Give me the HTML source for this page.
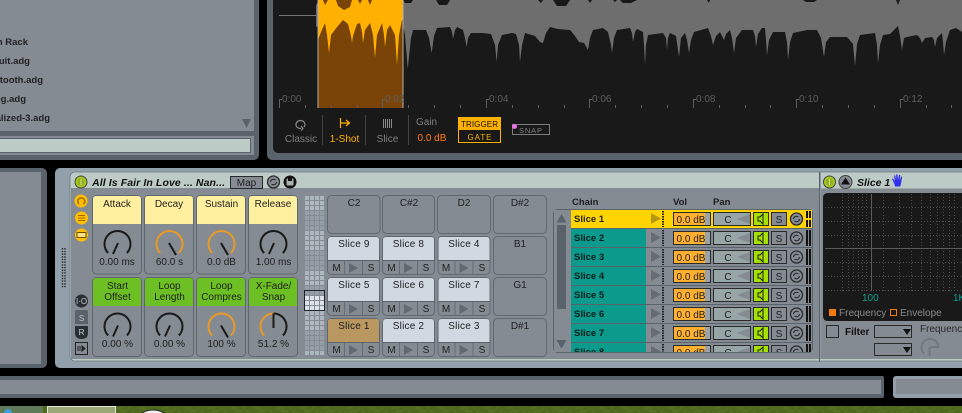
<!DOCTYPE html>
<html><head><meta charset="utf-8"><style>
html,body{margin:0;padding:0;background:#000;width:962px;height:413px;overflow:hidden}
svg{display:block;position:absolute;left:0;top:0}
text{font-family:"Liberation Sans",sans-serif;font-size:10px;fill:#1e1e1e}
.m{text-anchor:middle}
.b{font-weight:bold}
.bi{font-weight:bold;font-style:italic}
.g{fill:#7f7f7f}
.t{fill:#5e5e5e;font-size:10px}
.e{text-anchor:end;font-weight:bold;font-size:9.5px;fill:#222}
.s{font-size:9.5px;fill:#0c1c1a;font-weight:bold}
</style></head><body>
<svg width="962" height="413" viewBox="0 0 962 413" xmlns="http://www.w3.org/2000/svg">
<defs>
<pattern id="pg" x="305" y="196" width="5" height="5" patternUnits="userSpaceOnUse"><rect width="4" height="4" fill="#949fa9"/></pattern>
<pattern id="pl" x="305" y="196" width="5" height="5" patternUnits="userSpaceOnUse"><rect width="4" height="4" fill="#acb7bf"/></pattern>
<pattern id="pw" x="305" y="196" width="5" height="5" patternUnits="userSpaceOnUse"><rect width="4" height="4" fill="#dde3e8"/></pattern>
<clipPath id="cl"><rect x="554" y="210" width="258" height="142"/></clipPath>
<g id="kb"><path d="M-9.4 9A13 13 0 1 1 9.4 9" fill="none" stroke="#1a1a1a" stroke-width="2"/><path d="M0.5 -1L-4.5 10" stroke="#1a1a1a" stroke-width="2"/></g>
<g id="ko"><path d="M-9.4 9A13 13 0 1 1 9.4 9" fill="none" stroke="#e89a26" stroke-width="2"/><path d="M-0.5 -1L6.5 11" stroke="#1a1a1a" stroke-width="2"/></g>
<g id="pad"><rect x=".5" y=".5" width="52" height="38" rx="4" fill="#858b92" stroke="#60676f"/><path d="M1 24V4q0-3 3-3h45q3 0 3 3v20z" fill="#d0d8e2"/><path d="M1 24.5h52" stroke="#5a626c"/><path d="M17.5 25v13M35.5 25v13" stroke="#666d75"/><path d="M22 27l9 5l-9 5z" fill="#626970"/></g>
<g id="row">
<rect x="646" y="0" width="166" height="18" fill="#858b92"/>
<rect x="571" y="0" width="75" height="18" fill="#0b9a8c"/>
<path d="M651 3l10 5.500l-10 5.500z" fill="#666c73"/>
<path d="M663 1v16" stroke="#222" stroke-width="2" stroke-dasharray="1.500 1"/>
<rect x="673.500" y="2.500" width="37" height="13" fill="#9aa3a8" stroke="#2a2a2a"/>
<rect x="674" y="3" width="31" height="12" fill="#ffb030"/>
<rect x="713.500" y="2.500" width="37" height="13" fill="#98a5a6" stroke="#2a2a2a"/>
<path d="M750 4v10l-13-5z" fill="#858b92"/>
<rect x="753.500" y="2.500" width="15" height="13" fill="#a6e000" stroke="#2a2a2a"/>
<path d="M758 7h2l3-3v10l-3-3h-2z" fill="none" stroke="#1a1a1a"/>
<rect x="771.500" y="2.500" width="15" height="13" fill="#858b92" stroke="#2a2a2a"/>
<circle cx="796.500" cy="9" r="6" fill="#858b92" stroke="#2a2a2a" stroke-width="1.300"/>
<path d="M793.500 9a3 3 0 0 1 5-2M799.500 9a3 3 0 0 1-5 2" fill="none" stroke="#222"/>
<path d="M807 1v16M810 1v16" stroke="#111" stroke-width="2"/>
</g>
</defs>

<!-- top left panel -->
<rect x="-10" y="-10" width="269" height="170" rx="5" fill="#5a626c"/>
<rect x="0" y="0" width="254" height="131" fill="#858b92"/>
<rect x="0" y="136" width="254" height="19" fill="#858b92"/>
<rect x="-2" y="138.500" width="252.500" height="14" fill="#bdcbc6" stroke="#5a626c"/>
<path d="M242 119h9l-4.500 9z" fill="#5a626c"/>
<text class="e" x="28" y="45">Chain Rack</text>
<text class="e" x="30" y="64">Circuit.adg</text>
<text class="e" x="43" y="83">Sawtooth.adg</text>
<text class="e" x="26" y="102">Arpeg.adg</text>
<text class="e" x="50" y="121">Normalized-3.adg</text>

<!-- top right panel -->
<rect x="267" y="-10" width="705" height="170" rx="5" fill="#5a626c"/>
<path d="M273 0H962V153H279q-6 0-6-6z" fill="#191919"/>
<rect x="318" y="0" width="85" height="108" fill="#7a4408"/>
<path d="M279 15.500H316" stroke="#777"/>
<path d="M316 27V5l2-3v24z" fill="#6e6e6e"/>
<path d="M318 40L321 32L325 23L327 35L329 53L331 35L337 27L343 20L348 24L351 36L352 43L353 36L357 24L360 23L362 32L363 43L365 30L370 23L373 35L375 58L377 35L382 23L384 35L385 47L387 30L390 25L395 35L397 65L399 35L402 20L403 20V0H372L370 5L368 0H362L360 4L358 0H352L350 7L344 10L338 6L336 0H328L325 5L323 0H318Z" fill="#ffb000"/>
<path d="M403 25L405 35L407.700 69L411 38L413 30L420 30L426 30L429 38L431.700 53L434 36L437 28L450 27L452 32L453 39L455 30L457 27L463 30L465 38L466.700 47L468 38L471 33L483 33L491 34L495 45L496.700 62L498 45L502 35L512 33L516 34L519 45L520 62L522 45L525 33L535 36L540 42L543 43L546 33L550 27L558 29L570 30L575 36L579 42L584 43L588 50L590 38L593 30L603 28L608 32L611 45L612 53L614 38L617 30L630 28L632 33L633 42L635 32L637 29L643 32L644 45L645 65L646 45L648 35L663 33L666 38L667 50L668 38L670 33L676 36L679 57L681 38L685 33L687 40L689 53L691 40L694 32L708 28L711 36L713 45L716 36L720 32L722 36L724 40L726 34L730 30L732 38L734 53L736 38L742 30L753 30L755 36L756 47L758 34L762 28L765 28L766 40L767 55L769 40L773 32L785 32L787 42L788 60L790 42L793 33L807 30L817 30L821 38L824 57L826 42L830 37L847 37L853 44L855 66L857 44L860 35L875 33L877 45L878 63L880 45L883 35L890 34L898 26L900 36L902 50L904 38L907 37L917 35L920 38L922 43L925 38L932 37L934 40L935 47L937 38L942 33L943 42L944 55L946 42L950 30L956 28L962 32V0H403Z" fill="#6e6e6e"/>
<path d="M403 0h10l-2 3h-6zM436 0h14l-3 5h-8zM538 0h5l-2 3zM553 0h17l-4 6h-9zM588 0h4l-2 3zM613 0h4l-2 2zM620 0h17l-6 3h-8zM707 0h3l-1 3zM803 0h14l-3 2h-8zM896 0h4l-2 5z" fill="#191919"/>
<path d="M318 0V108M403 0V108" stroke="#b8b0a4" stroke-width="1"/>
<g stroke="#5e5e5e" fill="none">
<path d="M279.500 108V99.500H282M382.500 108V99.500H385M486.500 108V99.500H489M589.500 108V99.500H592M693.500 108V99.500H696M796.500 108V99.500H799M900.500 108V99.500H903"/>
<path d="M305.500 105v3M331.500 105v3M357.500 105v3M408.500 105v3M434.500 105v3M460.500 105v3M512.500 105v3M538.500 105v3M564.500 105v3M615.500 105v3M641.500 105v3M667.500 105v3M719.500 105v3M745.500 105v3M770.500 105v3M822.500 105v3M848.500 105v3M874.500 105v3M926.500 105v3M951.500 105v3"/>
</g>
<text class="t" x="282" y="102">0:00</text><text class="t" x="385" y="102">0:02</text><text class="t" x="489" y="102">0:04</text><text class="t" x="592" y="102">0:06</text><text class="t" x="696" y="102">0:08</text><text class="t" x="799" y="102">0:10</text><text class="t" x="903" y="102">0:12</text>

<path d="M322.500 115v30M365.500 115v30M408.500 115v30" stroke="#444"/>
<path d="M304 127a4.500 4 0 1 0-3 1.500M301 126l2 2.500l-2 2" fill="none" stroke="#8a8a8a" stroke-width="1.200"/>
<path d="M340.500 118v10M341 123h8M346 120l3.500 3l-3.500 3" fill="none" stroke="#ffb000" stroke-width="1.200"/>
<path d="M383.500 119v9M385.500 119v9M387.500 119v9M389.500 119v9M391.500 119v9" stroke="#8a8a8a"/>
<text class="m g" x="301" y="142">Classic</text>
<text class="m" x="344.500" y="142" style="fill:#ffb000">1-Shot</text>
<text class="m g" x="387.500" y="142">Slice</text>
<text class="g" x="416" y="125">Gain</text>
<text x="417.500" y="141" style="fill:#ff7a10">0.0 dB</text>
<rect x="458.500" y="117.500" width="42" height="25" fill="#191919" stroke="#ffb000"/>
<rect x="458" y="117" width="43" height="13" fill="#ffb000"/>
<text x="461" y="127" textLength="37" style="font-size:8px;fill:#111">TRIGGER</text>
<text x="467.500" y="140" textLength="24" style="font-size:8px;fill:#ffb000">GATE</text>
<rect x="512.500" y="124.500" width="37" height="10" fill="none" stroke="#7d7d7d"/>
<text x="519" y="133" textLength="23" style="font-size:7.500px;fill:#808080">SNAP</text>
<circle cx="514.500" cy="126.500" r="2.500" fill="#f070e8"/>

<!-- lower left panel -->
<rect x="-10" y="168" width="57" height="200" rx="5" fill="#5a626c"/>
<rect x="0" y="172" width="41" height="192" fill="#858b92"/>

<!-- rack -->
<rect x="55" y="168" width="917" height="200" rx="5" fill="#91a0ab"/>
<path d="M62.500 248V288M65 248V288" stroke="#333" stroke-width="1.500" stroke-dasharray="1.500 1.200"/>
<rect x="70" y="172" width="900" height="189" rx="5" fill="#bdcbc6" stroke="#6f7a80" stroke-width=".8"/>
<rect x="71" y="188" width="891" height="171" fill="#858b92"/>
<rect x="819" y="172" width="1" height="190" fill="#5a626c"/>
<rect x="820" y="172.500" width="1" height="186" fill="#8d9aa2"/>
<rect x="821" y="172.500" width="141" height="16" fill="#bdcbc6"/>

<!-- rack title -->
<circle cx="81" cy="182" r="6" fill="#a6c81e" stroke="#444" stroke-width="1"/>
<circle cx="81" cy="182" r="3.500" fill="#8fb020"/><path d="M81 179v6" stroke="#d8e090"/>
<text class="bi" x="92" y="186" textLength="133" style="font-size:10.500px;fill:#111">All Is Fair In Love ... Nan...</text>
<rect x="230.500" y="176.500" width="32" height="12" fill="#858b92" stroke="#2a2a2a"/>
<text class="m" x="246.500" y="186">Map</text>
<circle cx="273.500" cy="182" r="6" fill="#858b92" stroke="#2a2a2a" stroke-width="1.300"/>
<path d="M270.500 182a3 3 0 0 1 5-2M276.500 182a3 3 0 0 1-5 2" fill="none" stroke="#222"/>
<circle cx="290" cy="182" r="6.500" fill="#111"/><rect x="286.500" y="178.500" width="7" height="7" rx="1" fill="#a9b2b0"/><rect x="288" y="178.500" width="4" height="2.500" fill="#111"/>

<!-- left icons -->
<circle cx="81" cy="201" r="6.500" fill="#ffbe00"/><path d="M79 204a3.500 3.500 0 1 1 4.500 0" fill="none" stroke="#a06a00" stroke-width="1.500"/>
<circle cx="81.500" cy="218" r="6.500" fill="#ffbe00"/><path d="M78 215.500h7M78 218h7M78 220.500h7" stroke="#a06a00"/>
<circle cx="81.500" cy="235" r="6.500" fill="#ffbe00"/><rect x="77" y="232.500" width="9" height="5" fill="#ffe080" stroke="#6b5000"/>
<circle cx="81.500" cy="301" r="6.500" fill="#2a2f35"/>
<text class="m" x="81.500" y="304" style="font-size:8px;fill:#c8d0d0">I·O</text>
<path d="M75 312q0-2 2-2h9q2 0 2 2v12h-13z" fill="#5a626c"/>
<path d="M75 326h13v7q0 6-6.500 6t-6.500-6z" fill="#2a2f35"/>
<text class="m" x="81.500" y="321" style="font-size:8px;fill:#c0c8c8">S</text>
<text class="m" x="81.500" y="335" style="font-size:8px;fill:#c8d0d0">R</text>
<rect x="75.500" y="342.500" width="12" height="12" fill="#858b92" stroke="#222"/>
<path d="M78 346v5M80 346v5M82 346l3 2.500l-3 2.500z" stroke="#222" fill="#222"/>

<!-- macros -->
<g fill="#858b92" stroke="#5f666e">
<rect x="92.500" y="195.500" width="49" height="78.500" rx="4"/><rect x="144.500" y="195.500" width="49" height="78.500" rx="4"/><rect x="196.500" y="195.500" width="49" height="78.500" rx="4"/><rect x="248.500" y="195.500" width="49" height="78.500" rx="4"/>
<rect x="92.500" y="277.500" width="49" height="79" rx="4"/><rect x="144.500" y="277.500" width="49" height="79" rx="4"/><rect x="196.500" y="277.500" width="49" height="79" rx="4"/><rect x="248.500" y="277.500" width="49" height="79" rx="4"/>
</g>
<g fill="#fff0a0">
<path d="M93 224V199q0-3 3-3h42q3 0 3 3v25z"/><path d="M145 224V199q0-3 3-3h42q3 0 3 3v25z"/><path d="M197 224V199q0-3 3-3h42q3 0 3 3v25z"/><path d="M249 224V199q0-3 3-3h42q3 0 3 3v25z"/>
</g>
<g fill="#6cc024">
<path d="M93 306V281q0-3 3-3h42q3 0 3 3v25z"/><path d="M145 306V281q0-3 3-3h42q3 0 3 3v25z"/><path d="M197 306V281q0-3 3-3h42q3 0 3 3v25z"/><path d="M249 306V281q0-3 3-3h42q3 0 3 3v25z"/>
</g>
<text class="m" x="117" y="207">Attack</text><text class="m" x="169" y="207">Decay</text><text class="m" x="221.500" y="207">Sustain</text><text class="m" x="273" y="207">Release</text>
<use href="#kb" x="117.500" y="244"/><use href="#ko" x="169.500" y="244"/><use href="#ko" x="221.500" y="244"/><use href="#kb" x="273.500" y="244"/>
<text class="m" x="117" y="265">0.00 ms</text><text class="m" x="169.500" y="265">60.0 s</text><text class="m" x="221.500" y="265">0.0 dB</text><text class="m" x="273.500" y="265">1.00 ms</text>
<text class="m" x="117.500" y="289">Start</text><text class="m" x="117.500" y="300">Offset</text>
<text class="m" x="169.500" y="289">Loop</text><text class="m" x="169.500" y="300">Length</text>
<text class="m" x="221.500" y="289">Loop</text><text class="m" x="221.500" y="300">Compres</text>
<text class="m" x="273.500" y="289">X-Fade/</text><text class="m" x="273.500" y="300">Snap</text>
<use href="#kb" x="117.500" y="326.500"/><use href="#kb" x="169.500" y="326.500"/><use href="#ko" x="221.500" y="326.500"/>
<path d="M264.100 335.500A13 13 0 0 1 273.500 313.500" fill="none" stroke="#e89a26" stroke-width="2"/>
<path d="M273.500 313.500A13 13 0 0 1 282.900 335.500" fill="none" stroke="#1a1a1a" stroke-width="2"/>
<path d="M273.500 313.500V328" stroke="#1a1a1a" stroke-width="2"/>
<text class="m" x="117.500" y="347">0.00 %</text><text class="m" x="169.500" y="347">0.00 %</text><text class="m" x="221.500" y="347">100 %</text><text class="m" x="273.500" y="347">51.2 %</text>

<!-- pad overview -->
<rect x="305" y="196" width="20" height="15" fill="url(#pl)"/>
<rect x="305" y="211" width="20" height="20" fill="url(#pg)"/>
<rect x="305" y="231" width="20" height="20" fill="url(#pl)"/>
<rect x="305" y="251" width="20" height="20" fill="url(#pg)"/>
<rect x="305" y="271" width="20" height="15" fill="url(#pl)"/>
<rect x="305" y="286" width="20" height="10" fill="url(#pg)"/>
<rect x="305" y="296" width="20" height="15" fill="url(#pw)"/>
<rect x="305" y="311" width="20" height="20" fill="url(#pl)"/>
<rect x="305" y="331" width="20" height="20" fill="url(#pg)"/>
<rect x="305" y="351" width="20" height="5" fill="url(#pl)"/>
<rect x="304.500" y="290.500" width="20" height="20" fill="none" stroke="#1e2226"/>

<!-- pads -->
<g fill="#858b92" stroke="#60676f">
<rect x="327.500" y="195.500" width="52.500" height="38" rx="4"/><rect x="382.500" y="195.500" width="52" height="38" rx="4"/><rect x="437.500" y="195.500" width="53" height="38" rx="4"/><rect x="493.500" y="195.500" width="53" height="38" rx="4"/>
<rect x="493.500" y="236.500" width="53" height="38" rx="4"/><rect x="493.500" y="277.500" width="53" height="38" rx="4"/><rect x="493.500" y="318.500" width="53" height="38" rx="4"/>
</g>
<text class="m" x="354" y="206">C2</text><text class="m" x="409" y="206">C#2</text><text class="m" x="464" y="206">D2</text><text class="m" x="520" y="206">D#2</text>
<text class="m" x="520" y="247">B1</text><text class="m" x="520" y="288">G1</text><text class="m" x="520" y="329">D#1</text>
<use href="#pad" x="327" y="236"/><use href="#pad" x="382" y="236"/><use href="#pad" x="437.500" y="236"/>
<use href="#pad" x="327" y="277"/><use href="#pad" x="382" y="277"/><use href="#pad" x="437.500" y="277"/>
<use href="#pad" x="327" y="318"/><use href="#pad" x="382" y="318"/><use href="#pad" x="437.500" y="318"/>
<path d="M328 342V322q0-3 3-3h45q3 0 3 3v20z" fill="#b89860"/><path d="M328 342.500h52" stroke="#5a626c"/>
<g style="letter-spacing:.2px">
<text class="m" x="354" y="247">Slice 9</text><text class="m" x="408.500" y="247">Slice 8</text><text class="m" x="464" y="247">Slice 4</text>
<text class="m" x="354" y="288">Slice 5</text><text class="m" x="408.500" y="288">Slice 6</text><text class="m" x="464" y="288">Slice 7</text>
<text class="m" x="354" y="329">Slice 1</text><text class="m" x="408.500" y="329">Slice 2</text><text class="m" x="464" y="329">Slice 3</text>
</g>
<g style="font-size:9.500px">
<text class="m" x="336.500" y="271">M</text><text class="m" x="371" y="271">S</text><text class="m" x="391.500" y="271">M</text><text class="m" x="426" y="271">S</text><text class="m" x="446" y="271">M</text><text class="m" x="482" y="271">S</text>
<text class="m" x="336.500" y="312">M</text><text class="m" x="371" y="312">S</text><text class="m" x="391.500" y="312">M</text><text class="m" x="426" y="312">S</text><text class="m" x="446" y="312">M</text><text class="m" x="482" y="312">S</text>
<text class="m" x="336.500" y="353">M</text><text class="m" x="371" y="353">S</text><text class="m" x="391.500" y="353">M</text><text class="m" x="426" y="353">S</text><text class="m" x="446" y="353">M</text><text class="m" x="482" y="353">S</text>
</g>

<!-- chain list -->
<text class="b" x="572" y="205" style="font-size:9.500px">Chain</text>
<text class="b" x="673" y="205" style="font-size:9.500px">Vol</text>
<text class="b" x="713" y="205" style="font-size:9.500px">Pan</text>
<rect x="553.500" y="209.500" width="259" height="143" rx="4" fill="#5a626c" stroke="#5a626c"/>
<rect x="554" y="210" width="17" height="142" fill="#858b92"/>
<path d="M561.500 214l5 8.500h-10z" fill="#5a626c"/>
<rect x="557" y="225" width="9" height="84" fill="#5a626c"/>
<path d="M556.500 340h10l-5 8.500z" fill="#5a626c"/>
<g clip-path="url(#cl)">
<use href="#row" x="0" y="210"/><use href="#row" x="0" y="229"/><use href="#row" x="0" y="248"/><use href="#row" x="0" y="267"/><use href="#row" x="0" y="286"/><use href="#row" x="0" y="305"/><use href="#row" x="0" y="324"/><use href="#row" x="0" y="343"/>
<!-- selected row -->
<rect x="571" y="210" width="241" height="18" fill="#ffd400"/>
<path d="M651 213l10 5.500l-10 5.500z" fill="#b59a10"/>
<path d="M663 211v16" stroke="#222" stroke-width="2" stroke-dasharray="1.500 1"/>
<rect x="673.500" y="212.500" width="37" height="13" fill="#9aa3a8" stroke="#2a2a2a"/><rect x="674" y="213" width="31" height="12" fill="#ffb030"/>
<rect x="713.500" y="212.500" width="37" height="13" fill="#98a5a6" stroke="#2a2a2a"/><path d="M750 214v10l-13-5z" fill="#858b92"/>
<rect x="753.500" y="212.500" width="15" height="13" fill="#a6e000" stroke="#2a2a2a"/><path d="M758 217h2l3-3v10l-3-3h-2z" fill="none" stroke="#1a1a1a"/>
<rect x="771.500" y="212.500" width="15" height="13" fill="#858b92" stroke="#2a2a2a"/>
<circle cx="796.500" cy="219" r="6" fill="#858b92" stroke="#2a2a2a" stroke-width="1.300"/><path d="M793.500 219a3 3 0 0 1 5-2M799.500 219a3 3 0 0 1-5 2" fill="none" stroke="#222"/>
<path d="M807 211v16M810 211v16" stroke="#111" stroke-width="2" stroke-dasharray="7 2"/>
<text class="s" x="574" y="222" style="fill:#222">Slice 1</text><text class="s" x="574" y="241">Slice 2</text><text class="s" x="574" y="260">Slice 3</text><text class="s" x="574" y="279">Slice 4</text><text class="s" x="574" y="298">Slice 5</text><text class="s" x="574" y="317">Slice 6</text><text class="s" x="574" y="336">Slice 7</text><text class="s" x="574" y="355">Slice 8</text>
<text class="m" x="691" y="223">0.0 dB</text><text class="m" x="691" y="242">0.0 dB</text><text class="m" x="691" y="261">0.0 dB</text><text class="m" x="691" y="280">0.0 dB</text><text class="m" x="691" y="299">0.0 dB</text><text class="m" x="691" y="318">0.0 dB</text><text class="m" x="691" y="337">0.0 dB</text><text class="m" x="691" y="356">0.0 dB</text>
<text class="m" x="728" y="223">C</text><text class="m" x="728" y="242">C</text><text class="m" x="728" y="261">C</text><text class="m" x="728" y="280">C</text><text class="m" x="728" y="299">C</text><text class="m" x="728" y="318">C</text><text class="m" x="728" y="337">C</text><text class="m" x="728" y="356">C</text>
<text class="m" x="779" y="223">S</text><text class="m" x="779" y="242">S</text><text class="m" x="779" y="261">S</text><text class="m" x="779" y="280">S</text><text class="m" x="779" y="299">S</text><text class="m" x="779" y="318">S</text><text class="m" x="779" y="337">S</text><text class="m" x="779" y="356">S</text>
</g>

<!-- slice device -->
<circle cx="829.500" cy="182" r="6" fill="#a6c81e" stroke="#444"/><circle cx="829.500" cy="182" r="3.500" fill="#8fb020"/><path d="M829.500 179v6" stroke="#d8e090"/>
<circle cx="845.500" cy="182" r="6.500" fill="#858b92" stroke="#444"/><path d="M845.500 177.500l4.500 7h-9z" fill="#111"/>
<text class="bi" x="857" y="186" style="font-size:10.500px;fill:#111">Slice 1</text>
<path d="M894 183l-2-4 1-.5 2 3-1-6h1.200l1 4.500 0-5.500h1.300l.5 5.500 1-5h1.200l-.5 5.500 1.500-4h1l-1 6-1 4h-5z" fill="#3030f0"/>
<path d="M823 198q0-5 5-5H962V321H828q-5 0-5-5z" fill="#191919"/>
<g stroke="#4a4a4a" stroke-dasharray="1 2" fill="none">
<path d="M825 207.500H962M825 221.500H962M825 235.500H962M825 262.500H962M825 276.500H962M825 290.500H962"/>
<path d="M842.500 194V291M848.500 194V291M853.500 194V291M858.500 194V291M862.500 194V291M866.500 194V291M883.500 194V291M899.500 194V291M911.500 194V291M921.500 194V291M930.500 194V291M937.500 194V291M943.500 194V291M949.500 194V291M954.500 194V291"/>
</g>
<path d="M825 248.500H962M871.500 194V291" stroke="#5a5a5a"/>
<text x="862" y="301" style="fill:#0aa090">100</text><text x="953" y="301" style="fill:#0aa090">1K</text>
<rect x="829" y="309" width="7" height="7" fill="#f57a10"/>
<text x="839" y="316" style="fill:#8a8a8a">Frequency</text>
<rect x="890.500" y="309.500" width="6" height="6" fill="none" stroke="#f57a10"/>
<text x="900" y="316" style="fill:#8a8a8a">Envelope</text>
<rect x="826.500" y="325.500" width="12" height="12" fill="#858b92" stroke="#2a2a2a"/>
<text class="b" x="845" y="335" style="fill:#111">Filter</text>
<rect x="874.500" y="325.500" width="37" height="12" fill="#858b92" stroke="#2a2a2a"/><path d="M903 329h8l-4 6z" fill="#111"/>
<rect x="874.500" y="343.500" width="37" height="12" fill="#858b92" stroke="#2a2a2a"/><path d="M903 347h8l-4 6z" fill="#111"/>
<text x="920" y="332" style="fill:#2a2a2a">Frequency</text>
<path d="M924.300 353.700A8.500 8.500 0 1 1 938.500 347H930M929.500 347v9" fill="none" stroke="#707a7e" stroke-width="2"/>

<!-- bottom bars -->
<rect x="-10" y="376" width="894" height="22" rx="2" fill="#5a626c"/>
<rect x="0" y="380" width="881" height="14" fill="#858b92"/>
<rect x="893" y="376" width="80" height="22" rx="3" fill="#91a0ab"/>
<rect x="896" y="379" width="70" height="15" fill="#858b92"/>

<!-- desktop -->
<rect x="0" y="406" width="962" height="7" fill="#4f6a1e"/>
<path d="M116 408h846M120 411h842" stroke="#5f7a28" stroke-dasharray="7 5 2 9"/>
<rect x="0" y="406" width="43" height="7" fill="#5f7a58"/><circle cx="8" cy="413" r="4" fill="#3aa0d8"/>
<rect x="47.500" y="406.500" width="68" height="8" fill="#9aa878" stroke="#e4e8d8"/>
<ellipse cx="153" cy="420" rx="15" ry="10" fill="#f0f0f0" stroke="#222"/>
</svg>
</body></html>
